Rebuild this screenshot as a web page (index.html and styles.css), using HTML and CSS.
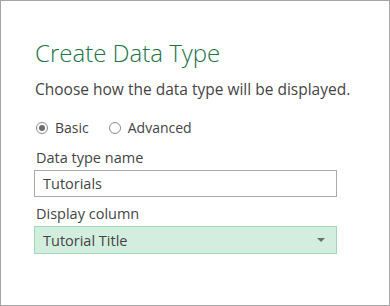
FILE: index.html
```html
<!DOCTYPE html>
<html lang="en">
<head>
  <meta charset="UTF-8">
  <title>Create Data Type</title>
  <link rel="stylesheet" href="styles.css">
</head>
<body>
  <div class="dialog">
    <h1 class="title">Create Data Type</h1>
    <p class="intro">Choose how the data type will be displayed.</p>

    <div class="radio-row">
      <label class="radio"><span class="dot checked"></span>Basic</label>
      <label class="radio"><span class="dot"></span>Advanced</label>
    </div>

    <div class="field">
      <div class="label">Data type name</div>
      <div class="textbox">Tutorials</div>
    </div>

    <div class="field field-tight">
      <div class="label">Display column</div>
      <div class="dropdown">
        <span>Tutorial Title</span>
        <span class="arrow"></span>
      </div>
    </div>
  </div>
</body>
</html>
```

FILE: styles.css
```css
body {
  margin: 0;
  background: #ffffff;
}

.dialog {
  width: 390px;
  height: 306px;
  box-sizing: border-box;
  border: 1px solid #a6a6a6;
  padding: 36px 0 0 33px;
  font-family: "Open Sans", "Noto Sans", sans-serif;
  color: #444444;
}

.title {
  margin: 0 0 0 1px;
  font-size: 24px;
  font-weight: 300;
  color: #217346;
  line-height: 32px;
}

.intro {
  margin: 10px 0 0 1px;
  font-size: 15.5px;
  line-height: 21px;
}

.radio-row {
  display: flex;
  gap: 18px;
  margin-top: 18px;
  font-size: 14px;
  line-height: 20px;
}

.radio {
  display: flex;
  align-items: center;
  gap: 7px;
}

.dot {
  width: 12px;
  height: 12px;
  border: 1px solid #8a8a8a;
  border-radius: 50%;
  box-sizing: border-box;
  position: relative;
  margin-left: 2px;
}

.dot.checked::after {
  content: "";
  position: absolute;
  left: 2px;
  top: 2px;
  width: 6px;
  height: 6px;
  border-radius: 50%;
  background: #6d6d6d;
}

.field {
  margin-top: 10px;
  width: 303px;
}

.field-tight {
  margin-top: 7px;
}

.label {
  font-size: 14.5px;
  line-height: 20px;
  margin-left: 2px;
}

.textbox,
.dropdown {
  height: 27px;
  box-sizing: border-box;
  border: 1px solid #ababab;
  padding: 0 0 0 8px;
  font-size: 14.5px;
  line-height: 25px;
  margin-top: 2px;
}

.dropdown {
  height: 28px;
  display: flex;
  justify-content: space-between;
  align-items: center;
  background: #d3eedf;
  border-color: #a1d7b6;
  padding-right: 11px;
}

.arrow {
  width: 0;
  height: 0;
  border-left: 4px solid transparent;
  border-right: 4px solid transparent;
  border-top: 4px solid #6d6d6d;
}
```
